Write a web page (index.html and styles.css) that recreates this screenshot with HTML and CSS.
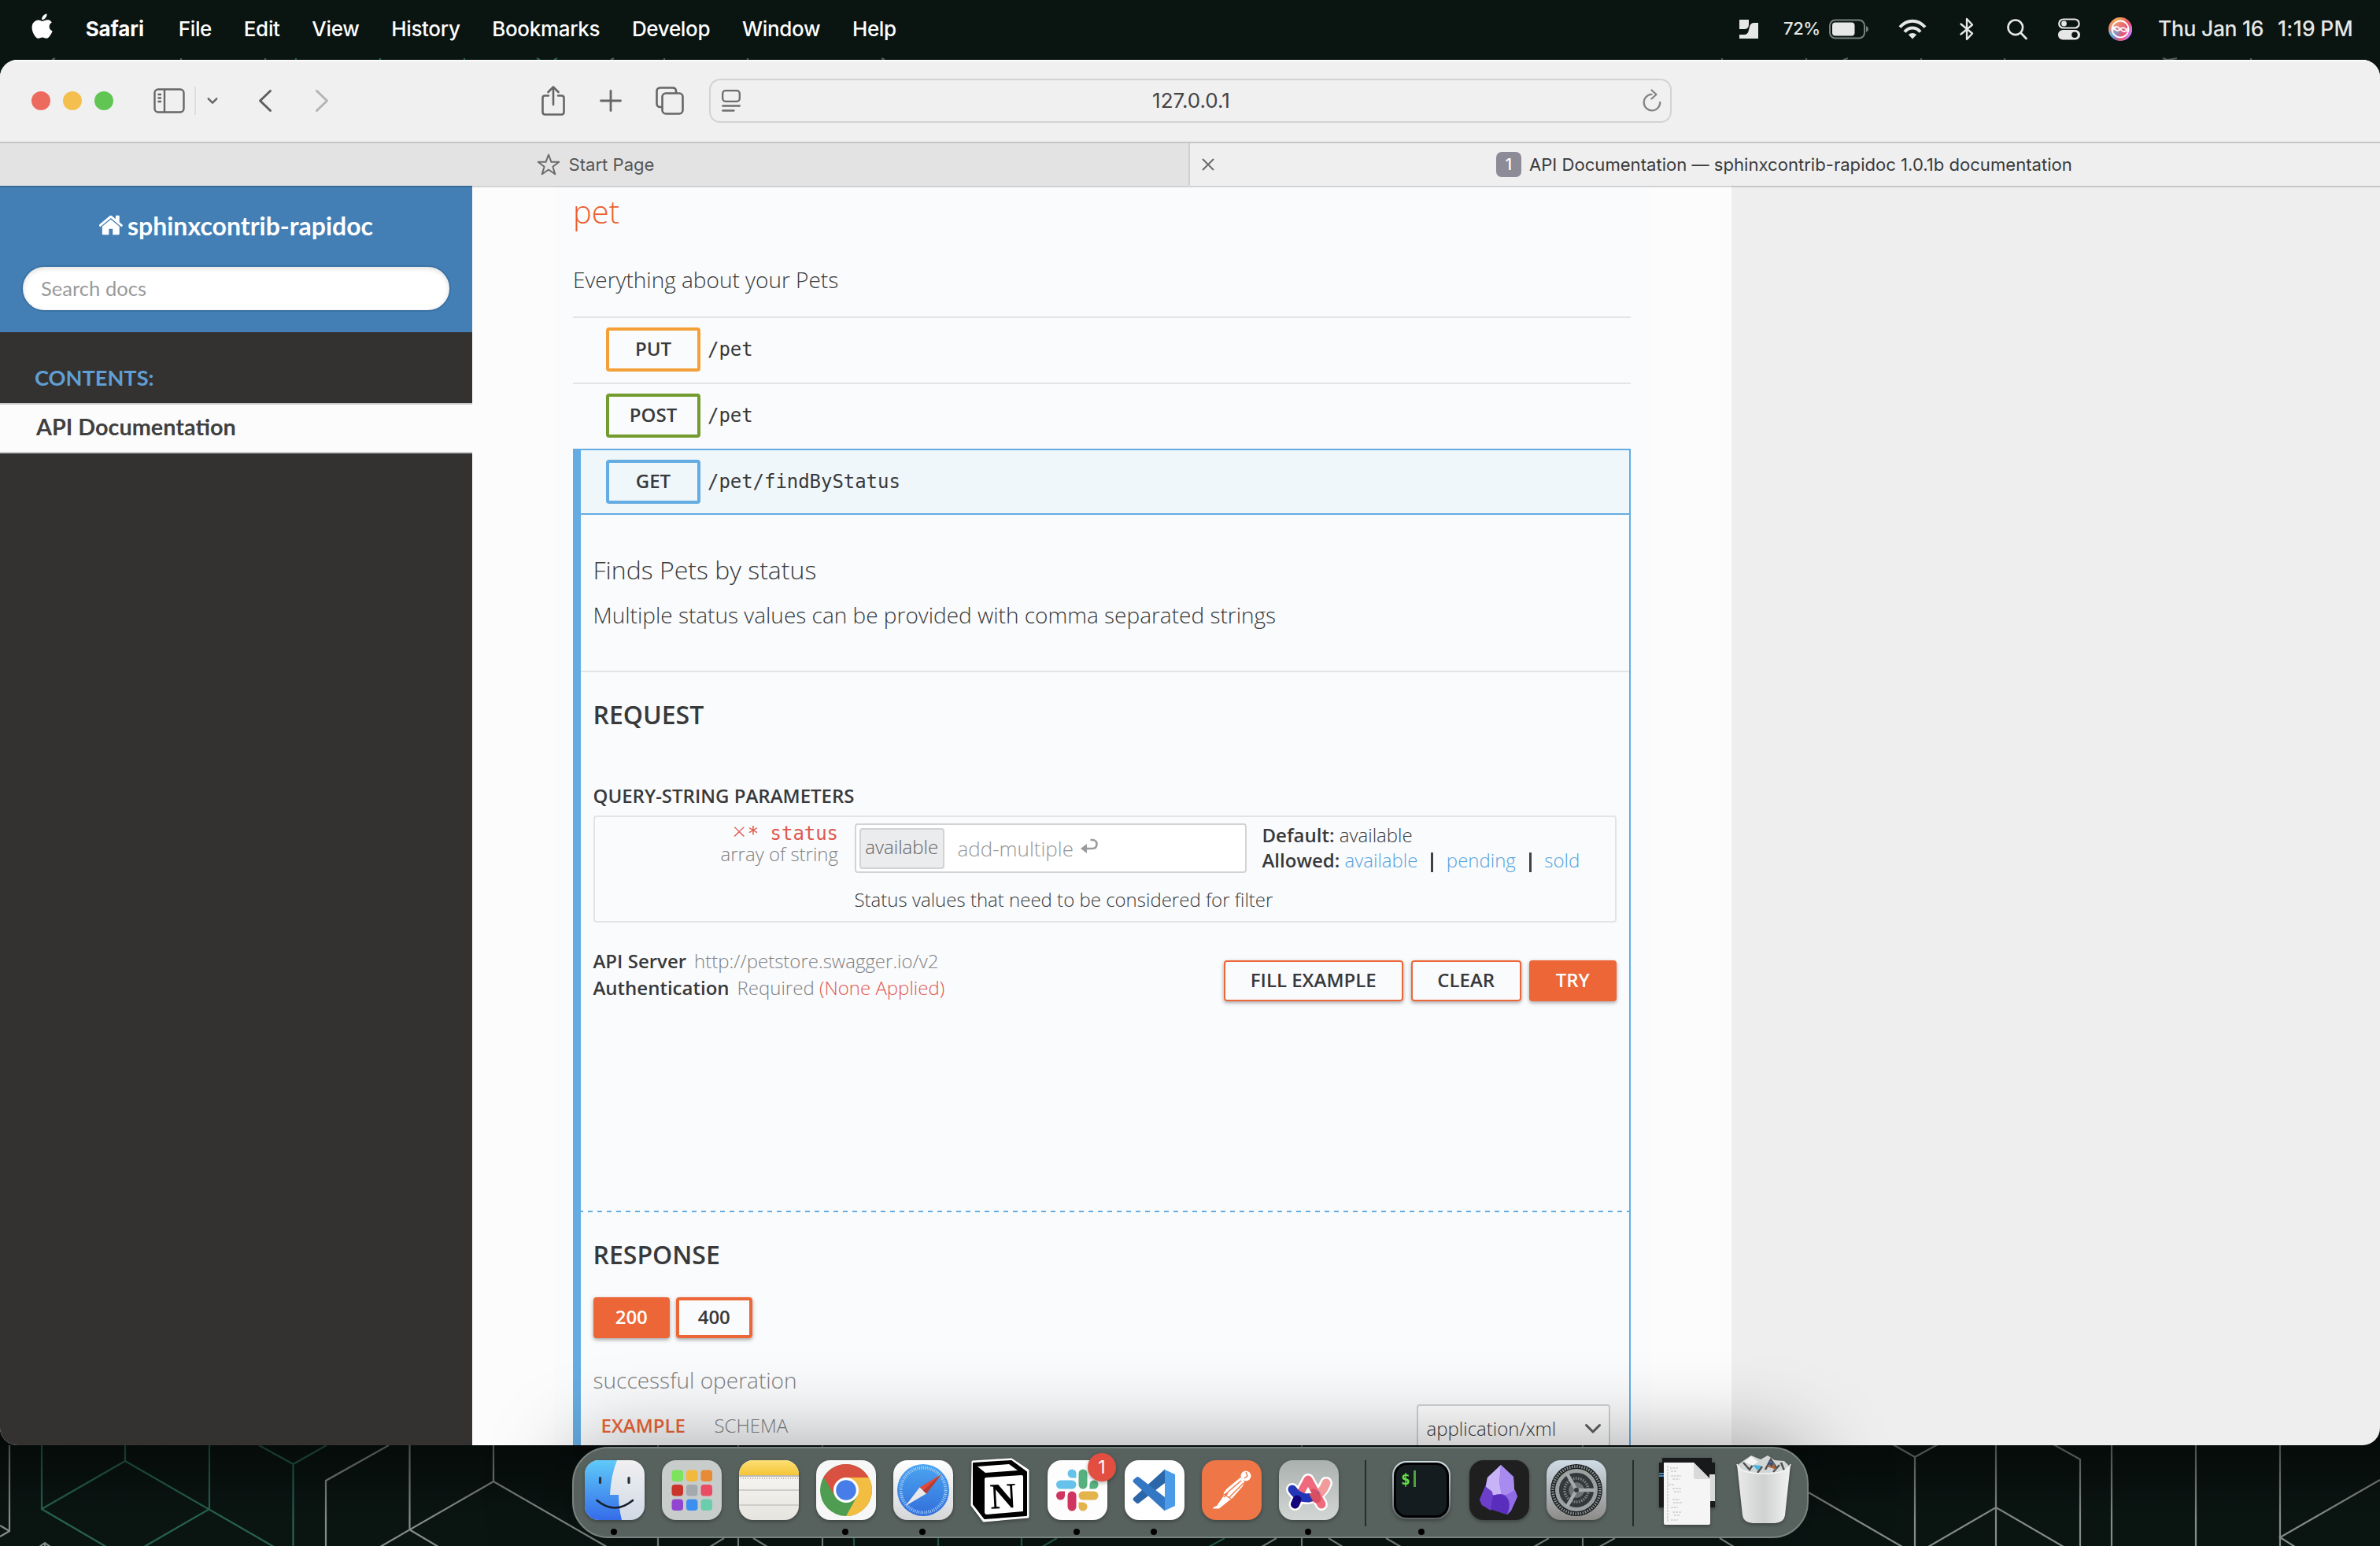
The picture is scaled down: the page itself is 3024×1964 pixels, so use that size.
FILE: index.html
```html
<!DOCTYPE html>
<html lang="en">
<head>
<meta charset="utf-8">
<title>API Documentation — sphinxcontrib-rapidoc 1.0.1b documentation</title>
<link rel="stylesheet" href="styles.css">
</head>
<body>
<div class="desktop">
  <svg class="wallpaper" width="3024" height="1964" viewBox="0 0 3024 1964" fill="none" stroke-width="2.200">
    <g stroke="#858b88">
      <path d="M12 1836V1945L0 1952M12 1945L0 1938M50 1965L57 1960L64 1965M57 1960V1964M494 1836L414 1881V1964M520.500 1836V1943M483 1965L627 1882L771 1965M520 1943L557 1965M627 1836V1882"/>
      <path d="M836 1836V1964M938 1836V1964M902 1965L920 1954M957 1954L975 1965M1045 1836V1964M1603 1965L1622 1954M1654 1836V1964M1688 1954L1706 1965M1761 1954L1780 1965M1949 1965L1968 1954M2011 1836V1964M2032 1965L2052 1954M2185 1954L2203 1965M2298 1896L2417 1965"/>
      <path d="M2405 1835L2433 1851L2462 1835M2433 1851V1964M2536 1836V1964M2450 1965L2536 1915L2622 1965M2609 1835L2643 1854V1964M2683 1836V1964M2790 1836V1964M2897 1836V1964M3024 1880L2897 1953L2916 1965"/>
      <path stroke-opacity=".6" d="M230 74V77M337 74V77M844 74V77M950 74V77M2188 74V77M2295 74V77M2441 74V77M2547 74V77M2860 74V77M66 76L70 74M776 76L780 74M1120 74L1124 76M2342 76L2348 74M2748 74L2754 76L2766 74"/>
    </g>
    <g stroke="#286350">
      <path d="M53 1836V1917L135 1965M53 1917L159 1856V1836M159 1856L348 1965M266 1836V1917L183 1965M329 1836L372.500 1860L415 1836M372.500 1860V1964M1085 1954V1964M1192 1954V1964M1298 1954V1964M1324 1965L1343 1954M1536 1965L1556 1954"/>
      <path d="M376 74V77M483 74V77M590 74V77M682 74L686 76M708 74L704 76"/>
    </g>
    <defs><linearGradient id="wshade" x1="0" x2="0" y1="0" y2="1"><stop offset="0" stop-opacity=".55"/><stop offset="1" stop-opacity="0"/></linearGradient></defs>
    <rect y="1820" width="3024" height="110" fill="url(#wshade)"/>
  </svg>

  <header class="menubar">
    <nav class="menus">
      <svg class="apple" width="28" height="33" viewBox="0 0 28 33" fill="#fff"><path d="M19.500 0.500c.3 2-.6 4-1.700 5.300-1.200 1.400-3 2.400-4.700 2.300-.2-1.900.7-3.900 1.800-5.100C16.100 1.600 18 .6 19.500.5zM25.800 11.500c-2 1.200-3.200 3-3.200 5.300 0 2.700 1.600 4.800 4 5.700-.6 1.900-1.500 3.700-2.700 5.300-1.400 2-2.700 4-4.900 4-2.100 0-2.700-1.300-5.100-1.300s-3.200 1.300-5.200 1.300c-2 .1-3.600-2.100-5-4.100C.9 23.700-.9 16.700 2.300 12.100c1.500-2.300 4-3.700 6.400-3.700 2.200 0 3.900 1.400 5.500 1.400 1.500 0 3.600-1.700 6.300-1.500 1.200 0 3.700.4 5.300 3.200z"/></svg>
      <span class="app">Safari</span><span>File</span><span>Edit</span><span>View</span><span>History</span><span>Bookmarks</span><span>Develop</span><span>Window</span><span>Help</span>
    </nav>
    <div class="status">
      <svg width="24" height="26" viewBox="0 0 24 26" fill="#e6e8e7"><path d="M0 1h12v6q0 6-6 6H0zM24 5v20H0v-5h6q5 0 6-6l1-4q1-5 6-5z"/></svg>
      <span class="pct">72%</span>
      <svg class="battery" width="50" height="26" viewBox="0 0 50 26"><rect x="1" y="1.500" width="44" height="23" rx="7" fill="none" stroke="#76807c" stroke-width="2"/><rect x="4" y="4.500" width="28.500" height="17" rx="4" fill="#e6e8e7"/><path d="M47 9q3 1.500 3 4t-3 4z" fill="#76807c"/></svg>
      <svg class="wifi" width="36" height="26" viewBox="0 0 36 26" fill="none" stroke="#e6e8e7" stroke-width="4"><path d="M2 10.500Q9 2.800 18 2.800T34 10.500"/><path d="M8 16.500Q12 11.500 18 11.500T28 16.500"/><path d="M18 25.500L12.800 20Q18 15.800 23.200 20z" fill="#e6e8e7" stroke="none"/></svg>
      <svg class="bt" width="18" height="30" viewBox="0 0 18 30" fill="none" stroke="#e6e8e7" stroke-width="2.300" stroke-linejoin="round" stroke-linecap="round"><path d="M1.500 8.500L16 20.500L9 28V2L16 9.500L1.500 21.500"/></svg>
      <svg class="mag" width="26" height="27" viewBox="0 0 26 27" fill="none" stroke="#e6e8e7" stroke-width="2.600" stroke-linecap="round"><circle cx="10.800" cy="10.800" r="9.300"/><path d="M17.800 18L24.500 25"/></svg>
      <svg class="cc" width="28" height="28" viewBox="0 0 28 28"><rect x="1.200" y="1.500" width="25.500" height="11" rx="5.500" fill="none" stroke="#e6e8e7" stroke-width="2.200"/><circle cx="7.500" cy="7" r="3.400" fill="#e6e8e7"/><rect y="15" width="28" height="12.500" rx="6.200" fill="#e6e8e7"/><circle cx="21" cy="21.200" r="3.800" fill="#0a1512"/></svg>
      <svg class="siri" width="30" height="30" viewBox="0 0 30 30"><defs><linearGradient id="s1" x1="0" y1="0" x2="0.300" y2="1"><stop offset="0" stop-color="#f7a93b"/><stop offset=".45" stop-color="#e98a7c"/><stop offset=".75" stop-color="#58b6f0"/><stop offset="1" stop-color="#3b8cf0"/></linearGradient><linearGradient id="s2" x1="0" y1="0" x2="1" y2="0.500"><stop offset=".4" stop-color="#f0506a" stop-opacity="0"/><stop offset=".8" stop-color="#f0506a"/><stop offset="1" stop-color="#d678f0"/></linearGradient></defs><circle cx="15" cy="15" r="15" fill="url(#s1)"/><circle cx="15" cy="15" r="15" fill="url(#s2)"/><circle cx="15" cy="15" r="10.500" fill="none" stroke="#fff" stroke-width="1.800"/><path d="M5 17Q9 8 15 15T25 13M6 12Q10 20 15 15T24 18" fill="none" stroke="#fff" stroke-width="1.800"/></svg>
      <span class="date">Thu Jan 16</span><span class="clock">1:19 PM</span>
    </div>
  </header>

  <section class="window">
    <div class="toolbar">
      <div class="tb-left">
        <i class="light red"></i><i class="light yellow"></i><i class="light green"></i>
        <svg class="i-side" width="40" height="32" viewBox="0 0 40 32" fill="none" stroke="#666" stroke-width="2.400"><rect x="1.500" y="1.500" width="37" height="29" rx="4.500"/><path d="M14 2V30M5.500 8H10M5.500 12.500H10M5.500 17H10"/></svg>
        <i class="vline"></i>
        <svg class="i-down" width="14" height="10" viewBox="0 0 16 10" fill="none" stroke="#666" stroke-width="2.800" stroke-linecap="round" stroke-linejoin="round"><path d="M2 2L8 8L14 2"/></svg>
        <svg class="i-back" width="18" height="30" viewBox="0 0 18 30" fill="none" stroke="#5f5f5f" stroke-width="3" stroke-linecap="round" stroke-linejoin="round"><path d="M15.500 2.500L2.500 15L15.500 27.500"/></svg>
        <svg class="i-fwd" width="18" height="30" viewBox="0 0 18 30" fill="none" stroke="#b4b4b4" stroke-width="3" stroke-linecap="round" stroke-linejoin="round"><path d="M2.500 2.500L15.500 15L2.500 27.500"/></svg>
      </div>
      <div class="tb-mid">
        <svg width="30" height="38" viewBox="0 0 30 38" fill="none" stroke="#666" stroke-width="2.600" stroke-linecap="round" stroke-linejoin="round"><path d="M9 12.500H4.500Q1.500 12.500 1.500 15.500V33Q1.500 36.500 4.500 36.500H25.500Q28.500 36.500 28.500 33V15.500Q28.500 12.500 25.500 12.500H21M15 24V2M8.500 8L15 1.500L21.500 8"/></svg>
        <svg class="i-plus" width="28" height="28" viewBox="0 0 28 28" stroke="#666" stroke-width="2.800" stroke-linecap="round"><path d="M14 1.500V26.500M1.500 14H26.500"/></svg>
        <svg class="i-tabs" width="36" height="36" viewBox="0 0 36 36" fill="none" stroke="#666" stroke-width="2.600"><path d="M8.500 26H6Q1.500 26 1.500 21.500V6Q1.500 1.500 6 1.500H21.500Q26 1.500 26 6V8.500"/><rect x="8.500" y="8.500" width="26" height="26" rx="4.500"/></svg>
      </div>
      <div class="address">
        <svg width="24" height="28" viewBox="0 0 24 28" fill="none" stroke="#6d6d6d" stroke-width="2.300" stroke-linecap="round"><rect x="1.200" y="1.200" width="21.600" height="13.600" rx="3.500"/><path d="M1.200 20.500H22.800M1.200 26.500H15.500"/></svg>
        <span>127.0.0.1</span>
        <svg width="26" height="30" viewBox="0 0 26 30" fill="none" stroke="#858585" stroke-width="2.300" stroke-linecap="round" stroke-linejoin="round"><path d="M12.500 6.800A10.300 10.300 0 1 0 23.300 17M12.500 1.500L18.500 7L12.500 12.500"/></svg>
      </div>
    </div>
    <div class="tabs">
      <div class="tab idle">
        <svg width="30" height="28" viewBox="0 0 30 28" fill="none" stroke="#6b6b6b" stroke-width="2" stroke-linejoin="round"><path d="M15 1.500L18.500 10.800H28.300L20.400 16.700L23.300 26.300L15 20.500L6.700 26.300L9.600 16.700L1.700 10.800H11.500z"/></svg>
        <span>Start Page</span>
      </div>
      <div class="tab current">
        <svg class="close" width="16" height="16" viewBox="0 0 16 16" stroke="#6b6b6b" stroke-width="2"><path d="M1 1L15 15M15 1L1 15"/></svg>
        <span class="favicon">1</span><span>API Documentation — sphinxcontrib-rapidoc 1.0.1b documentation</span>
      </div>
    </div>

    <div class="page">
      <aside class="side">
        <div class="side-top">
          <div class="project"><svg width="32" height="34" viewBox="64 0 1664 1792" fill="#fff"><path d="M1408 992v480q0 26-19 45t-45 19h-384v-384h-256v384h-384q-26 0-45-19t-19-45v-480q0-1 .5-3t.5-3l575-474 575 474q1 2 1 6zm223-69l-62 74q-8 9-21 11h-3q-13 0-21-7l-692-577-692 577q-12 8-24 7-13-2-21-11l-62-74q-8-10-7-23.500t11-21.500l719-599q32-26 76-26t76 26l244 204v-195q0-14 9-23t23-9h192q14 0 23 9t9 23v408l219 182q10 8 11 21.500t-7 23.500z"/></svg><span>sphinxcontrib-rapidoc</span></div>
          <div class="search">Search docs</div>
        </div>
        <div class="caption">CONTENTS:</div>
        <div class="toc">API Documentation</div>
      </aside>
      <main class="main">
        <div class="rapidoc">
          <h2>pet</h2>
          <p class="tagdesc">Everything about your Pets</p>
          <div class="op"><b class="method put">PUT</b><code>/pet</code></div>
          <div class="op"><b class="method post">POST</b><code>/pet</code></div>
          <section class="open">
            <div class="ophead"><b class="method get">GET</b><code>/pet/findByStatus</code></div>
            <div class="summary">
              <h3>Finds Pets by status</h3>
              <p>Multiple status values can be provided with comma separated strings</p>
            </div>
            <div class="request">
              <h4>REQUEST</h4>
              <h5>QUERY-STRING PARAMETERS</h5>
              <div class="params">
                <div class="pname"><code><span class="x">×</span>* status</code><span>array of string</span></div>
                <div class="pval">
                  <div class="field"><span class="chip">available</span><span class="ph">add-multiple</span><svg width="24" height="20" viewBox="0 0 24 20" fill="none" stroke="#9b9b9b" stroke-width="2.600"><path d="M4 13H15.500Q21.500 13 21.500 7.500T15.500 2H13.500"/><path d="M9 7V19L1 13z" fill="#9b9b9b" stroke="none"/></svg></div>
                  <p>Status values that need to be considered for filter</p>
                </div>
                <div class="pinfo">
                  <div><b>Default:</b> available</div>
                  <div><b>Allowed:</b> <a>available</a><i></i><a>pending</a><i></i><a>sold</a></div>
                </div>
              </div>
              <div class="actions">
                <div class="server">
                  <div><b>API Server</b><span>http://petstore.swagger.io/v2</span></div>
                  <div><b>Authentication</b><span>Required <em>(None Applied)</em></span></div>
                </div>
                <b class="btn fill">FILL EXAMPLE</b><b class="btn clear">CLEAR</b><b class="btn try">TRY</b>
              </div>
            </div>
            <div class="response">
              <h4>RESPONSE</h4>
              <div class="codes"><b class="on">200</b><b>400</b></div>
              <p>successful operation</p>
              <div class="viewbar"><b>EXAMPLE</b><span>SCHEMA</span>
                <div class="select"><span>application/xml</span><svg width="22" height="14" viewBox="0 0 22 14" fill="none" stroke="#5d5f60" stroke-width="3" stroke-linecap="round" stroke-linejoin="round"><path d="M2.500 2.500L11 11L19.500 2.500"/></svg></div>
              </div>
            </div>
          </section>
        </div>
      </main>
    </div>
  </section>

  <footer class="dock">
    <div class="app-icon running"><svg viewBox="0 0 76 76"><defs><linearGradient id="f1" x2="0" y2="1"><stop stop-color="#5fcaf9"/><stop offset="1" stop-color="#356ce9"/></linearGradient><linearGradient id="f2" x2="0" y2="1"><stop stop-color="#f1f0f2"/><stop offset="1" stop-color="#d0d9e6"/></linearGradient><clipPath id="rr"><rect width="76" height="76" rx="18"/></clipPath></defs><g clip-path="url(#rr)"><rect width="76" height="76" fill="url(#f2)"/><path d="M0 0H41Q33 20 32 44H43Q43 60 47 76H0z" fill="url(#f1)"/><path d="M19.500 22.500V28.500M56 22.500V28.500" stroke="#22303e" stroke-width="3.200" stroke-linecap="round"/><path d="M15.500 51Q38 70 61 51" fill="none" stroke="#17222e" stroke-width="2.600" stroke-linecap="round"/></g></svg></div>
    <div class="app-icon"><svg viewBox="0 0 76 76"><rect width="76" height="76" rx="18" fill="#c8cccb"/><rect x="12.500" y="12.500" width="14.500" height="14.500" rx="4" fill="#7be35c"/><rect x="31" y="12.500" width="14.500" height="14.500" rx="4" fill="#f3b93c"/><rect x="49.500" y="12.500" width="14.500" height="14.500" rx="4" fill="#e68b34"/><rect x="12.500" y="31" width="14.500" height="14.500" rx="4" fill="#c9352a"/><rect x="31" y="31" width="14.500" height="14.500" rx="4" fill="#a3a9ac"/><rect x="49.500" y="31" width="14.500" height="14.500" rx="4" fill="#ea4c63"/><rect x="12.500" y="49.500" width="14.500" height="14.500" rx="4" fill="#9146cf"/><rect x="31" y="49.500" width="14.500" height="14.500" rx="4" fill="#3b8ff0"/><rect x="49.500" y="49.500" width="14.500" height="14.500" rx="4" fill="#6bcdae"/></svg></div>
    <div class="app-icon"><svg viewBox="0 0 76 76"><defs><linearGradient id="n1" x2="0" y2="1"><stop stop-color="#fbdf75"/><stop offset="1" stop-color="#f5c536"/></linearGradient><linearGradient id="n2" x2="0" y2="1"><stop stop-color="#fbfaf9"/><stop offset="1" stop-color="#e6e4de"/></linearGradient></defs><g clip-path="url(#rr)"><rect width="76" height="76" fill="url(#n2)"/><rect width="76" height="19" fill="url(#n1)"/><path d="M0 20H76" stroke="#a8a59d" stroke-width="1.500"/><path d="M2 23H76" stroke="#b9b7b2" stroke-width="2" stroke-dasharray="1 2"/><path d="M0 38H76M0 57H76" stroke="#cfcecb" stroke-width="1.800"/></g></svg></div>
    <div class="app-icon running"><svg viewBox="0 0 76 76"><rect width="76" height="76" rx="18" fill="#f7f7f7"/><circle cx="38" cy="38" r="33" fill="#4f9d50"/><path d="M38 22H66.800A33 33 0 0 1 38 71L52 46z" fill="#f3bd42"/><path d="M24.100 46L9.400 21.500A33 33 0 0 1 66.800 22H38z" fill="#d95140"/><circle cx="38" cy="38" r="16" fill="#fff"/><circle cx="38" cy="38" r="12.800" fill="#477de8"/></svg></div>
    <div class="app-icon running"><svg viewBox="0 0 76 76"><defs><linearGradient id="sf" x2="0" y2="1"><stop stop-color="#4ba5f0"/><stop offset="1" stop-color="#326edb"/></linearGradient><linearGradient id="sb" x2="0" y2="1"><stop stop-color="#fff"/><stop offset="1" stop-color="#d4d6d8"/></linearGradient></defs><rect width="76" height="76" rx="18" fill="url(#sb)"/><circle cx="38" cy="38" r="33" fill="url(#sf)"/><circle cx="38" cy="38" r="28.500" fill="none" stroke="#b3d9fa" stroke-width="4" stroke-dasharray=".9 1.580"/><path d="M61 18L33.500 34.500L42 42.500z" fill="#df493b"/><path d="M15.500 58L33.500 34.500L42 42.500z" fill="#e9e9ea"/><path d="M61 18L37.800 38.500L42 42.500z" fill="#b53b35"/></svg></div>
    <div class="app-icon"><svg viewBox="0 0 76 76"><path d="M3 2L52 -1L73 13V72L17 77L2 57z" fill="#fff" stroke="#fff" stroke-width="3" stroke-linejoin="round"/><path d="M4 4L52 1L71 15V70L18 74L4 56z" fill="#000" stroke="#000" stroke-width="2" stroke-linejoin="round"/><path d="M9 8L49 5L60 13L19 16z" fill="#fff"/><path d="M20 22L65 19Q67 19 67 21V65L21 69Q18 69 18 66V24Q18 22 20 22z" fill="#fff"/><text x="41.500" y="61" text-anchor="middle" class="notion" transform="rotate(-3 41 45)">N</text></svg></div>
    <div class="app-icon running"><svg viewBox="0 0 76 76"><rect width="76" height="76" rx="18" fill="#fdfdfd"/><g stroke-width="11" stroke-linecap="round"><path d="M16.500 31H31" stroke="#66c2ea"/><path d="M45 17V31" stroke="#56b07f"/><path d="M45 45H59" stroke="#e3b44c"/><path d="M31 45V59" stroke="#cf3560"/></g><path d="M25.500 17a5.500 5.500 0 0 1 11 0v5.500h-5.500a5.500 5.500 0 0 1-5.500-5.500z" fill="#66c2ea"/><path d="M59 25.500a5.500 5.500 0 0 1 0 11h-5.500v-5.500a5.500 5.500 0 0 1 5.500-5.500z" fill="#56b07f"/><path d="M50.500 59a5.500 5.500 0 0 1-11 0v-5.500h5.500a5.500 5.500 0 0 1 5.500 5.500z" fill="#e3b44c"/><path d="M16.500 50.500a5.500 5.500 0 0 1 0-11h5.500v5.500a5.500 5.500 0 0 1-5.500 5.500z" fill="#cf3560"/></svg><span class="badge">1</span></div>
    <div class="app-icon running"><svg viewBox="0 0 76 76"><rect width="76" height="76" rx="18" fill="#fff"/><path d="M51 11.500L11 48Q10 49.500 11 51L15 54.500Q16.500 55.500 18 54.500L51 29z" fill="#2a66a8"/><path d="M51 64.500L11 28Q10 26.500 11 25L15 21.500Q16.500 20.500 18 21.500L51 47z" fill="#3478c4"/><path d="M50 11.500L64 18V58L50 64.500Q51 63 51 61V15Q51 13 50 11.500z" fill="#4a9ce8"/></svg></div>
    <div class="app-icon"><svg viewBox="0 0 76 76"><rect width="76" height="76" rx="18" fill="#ee7647"/><circle cx="56" cy="20" r="6.500" fill="#fff"/><path d="M49 22Q53 24 54 28L52 33L39 48L35 51L22 61.500H14L15 59.500L19 58L28 45L27 42.500L32 36z" fill="#fff"/><path d="M50 26L29 44M53 29L34 48M56 15L58 20L54 23M27 42.500L37 49M28 47L33 42" stroke="#ee7647" stroke-width="1.400" fill="none"/></svg></div>
    <div class="app-icon running"><svg viewBox="0 0 76 76"><defs><linearGradient id="ar" x2="0" y2="1"><stop stop-color="#abb1af"/><stop offset="1" stop-color="#d2d6d4"/></linearGradient></defs><rect width="76" height="76" rx="18" fill="url(#ar)"/><g fill="none" stroke-linecap="round" stroke-linejoin="round"><path d="M20.500 56L37 25L54 56M17 37Q24 48 36 48Q53 46 60 29" stroke="#fff" stroke-width="16"/><path d="M60 29Q54 46 38 48" stroke="#f29b9b" stroke-width="11"/><path d="M20.500 56L37 25L54 56" stroke="#ee6a7c" stroke-width="11"/><path d="M17 37Q24 48 37 48Q42 47 46 44" stroke="#2436b8" stroke-width="11"/><path d="M44 42L48 49" stroke="#d94f62" stroke-width="11"/><path d="M20.500 56L23 50" stroke="#12047c" stroke-width="11"/></g><path d="M32.500 42L37 34L41.500 42z" fill="#fff"/></svg></div>
    <div class="sep"></div>
    <div class="app-icon running"><svg viewBox="0 0 76 76"><defs><linearGradient id="tm" x2="0" y2="1"><stop stop-color="#cfdde5"/><stop offset="1" stop-color="#5d6163"/></linearGradient></defs><rect y="1" width="74" height="74" rx="18" fill="url(#tm)"/><rect x="3.500" y="4.500" width="67" height="67" rx="15" fill="#141c1f" stroke="#000" stroke-width="3"/><text x="11" y="30.500" class="term">$</text><path d="M28.500 13V34" stroke="#4da33a" stroke-width="3"/></svg></div>
    <div class="app-icon"><svg viewBox="0 0 76 76"><rect width="76" height="76" rx="18" fill="#1f1f20"/><path d="M40 6L23 22L20 35L13 50L16 57L27 62L48 69L53 64L61 46L57 37L56 21z" fill="#8b67df"/><path d="M40 6L23 22L20 38L30 44L41 44L38 28z" fill="#c7b3f5"/><path d="M40 6L56 21L57 37L60 46L50 44L41 44L38 28z" fill="#a98aef"/><path d="M20 33L13 50L16 57L27 64L31 50L29 40z" fill="#6b3fc9"/><path d="M30 45L27 62L48 69L53 62Q50 44 40 43Q34 43 30 45z" fill="#5a2ebd"/><path d="M61 46L53 64L48 69Q54 55 47 44L58 38z" fill="#8f6be6"/></svg></div>
    <div class="app-icon"><svg viewBox="0 0 76 76"><defs><linearGradient id="st" x2="0" y2="1"><stop stop-color="#cfdce6"/><stop offset="1" stop-color="#8d8b88"/></linearGradient></defs><rect width="76" height="76" rx="18" fill="url(#st)"/><circle cx="38" cy="38" r="33" fill="#1b1f20"/><circle cx="38" cy="38" r="30" fill="none" stroke="#8d9395" stroke-width="3.500" stroke-dasharray="1.600 1.540"/><circle cx="38" cy="38" r="24.500" fill="#33383a" stroke="#9ba0a1" stroke-width="5"/><circle cx="38" cy="38" r="15" fill="none" stroke="#7d8384" stroke-width="3.500" stroke-dasharray="1.600 1.540"/><circle cx="38" cy="38" r="10" fill="#6d7374"/><path d="M38 38L26 17M38 38L26 59M38 38H62" stroke="#a5aaab" stroke-width="4.500"/><circle cx="38" cy="38" r="3" fill="#333839"/></svg></div>
    <div class="sep"></div>
    <div class="app-icon"><svg viewBox="3 0 76 82"><path d="M6 -3H69V3H73V60H2V3H6z" fill="#17191a"/><path d="M66 18H73V52H66z" fill="#d7d9da"/><path d="M2 17H10M2 20H10" stroke="#4d83b9" stroke-width="2"/><path d="M8 3H46L67 24V80Q67 82 65 82H10Q8 82 8 80z" fill="#f5f5f5"/><path d="M46 3L67 24H48Q46 24 46 21z" fill="#d9d9d9"/><path d="M13 7V78M16 10H26M17 14H24M17 20H30M19 24H28M14 31H22M19 36H31M21 40H30M19 50H28M20 54H31M17 60H26M19 66H30M21 70H28M17 76H26" stroke="#bbb" stroke-width="1" stroke-dasharray="3 1"/></svg></div>
    <div class="app-icon"><svg viewBox="4 2 76 82"><defs><linearGradient id="tr"><stop stop-color="#e9eae9"/><stop offset=".5" stop-color="#cfd2d1"/><stop offset="1" stop-color="#f2f2f2"/></linearGradient></defs><path d="M5 8L13 2L22 -4L34 1L43 -4L52 2L64 3L71 10L66 19H10z" fill="#d3d6d6"/><path d="M12 5L20 14L28 2M17 2L24 8M40 14L47 1L55 13M60 5L64 15M30 18L36 10M50 17L58 8" stroke="#4f5152" stroke-width="2.500" fill="none"/><path d="M13 4L22 -3L31 4L24 9z" fill="#f4f4f4"/><path d="M24 8L35 9L30 15z" fill="#44b5e0"/><path d="M42 10L50 4L54 14z" fill="#a8653a"/><path d="M43 6L50 4L49 10z" fill="#2c4c8c"/><path d="M4 7Q7 19 38 19T72 7L65 72Q64 81 52 82H24Q12 81 11 72z" fill="url(#tr)"/><path d="M4 7Q7 19 38 19T72 7" fill="none" stroke="#f5f5f5" stroke-width="1.500"/></svg></div>
  </footer>
</div>
</body>
</html>
```
FILE: styles.css
```css
* { box-sizing: border-box; }
body { margin: 0; }
h2, h3, h4, h5, p { margin: 0; }
i, em { font-style: normal; }
svg { display: block; flex: none; }

.desktop {
  position: relative;
  width: 3024px;
  height: 1964px;
  overflow: hidden;
  background: #0a1512;
  font-family: Inter, sans-serif;
}
.wallpaper { position: absolute; left: 0; top: 0; }

/* menu bar */
.menubar {
  position: relative;
  display: flex;
  justify-content: space-between;
  height: 76px;
  padding: 0 26px 4px 40px;
  color: #fff;
  font-size: 26px;
  font-weight: 500;
  letter-spacing: -.32px;
  white-space: nowrap;
}
.menus { display: flex; align-items: center; gap: 40.700px; }
.apple { margin: -5px 0 0; }
.menus .app { margin-right: 3px; font-weight: 700; letter-spacing: -.1px; }
.status { display: flex; align-items: center; color: #e6e8e7; }
.status svg { margin-top: 2px; }
.pct { margin-left: 32px; width: 46px; font-size: 22px; letter-spacing: -.4px; }
.status .battery { margin-left: 12px; }
.status .wifi { margin-left: 38px; }
.status .bt { margin-left: 42px; }
.status .mag { margin-left: 42px; }
.status .cc { margin-left: 39px; }
.status .siri { margin-left: 36px; }
.date { margin-left: 33px; width: 152px; font-size: 26.500px; }
.clock { width: 104px; font-size: 26.500px; letter-spacing: .3px; word-spacing: -1px; }

/* browser window */
.window {
  position: relative;
  height: 1760px;
  border-radius: 22px;
  overflow: hidden;
  background: #eee;
}
.toolbar {
  display: flex;
  align-items: center;
  height: 104px;
  padding-bottom: 3px;
  background: #f0f0f0;
  border-top: 2px solid #fbfbfb;
}
.tb-left { display: flex; align-items: center; width: 688px; padding-left: 40px; }
.light { width: 24px; height: 24px; margin: 1px 16px 0 0; border-radius: 50%; }
.red { background: #ed6a5e; }
.yellow { background: #f5bf4f; }
.green { background: #61c554; }
.i-side { margin-left: 35px; }
.vline { width: 2px; height: 36px; margin: 0 14px 0 12px; background: #dedede; }
.i-back { margin-left: 51px; }
.i-fwd { margin-left: 54px; }
.tb-mid { display: flex; align-items: center; width: 213px; }
.i-plus { margin-left: 44px; }
.i-tabs { margin-left: 43px; }
.address {
  display: flex;
  align-items: center;
  justify-content: space-between;
  width: 1223px;
  height: 56px;
  padding: 0 10px 0 14px;
  border: 2px solid #d3d3d3;
  border-radius: 14px;
  color: #444;
  font-size: 26px;
}
.tabs {
  display: flex;
  height: 56px;
  padding-bottom: 1px;
  border-top: 2px solid #c6c6c6;
  background: linear-gradient(90deg, #e3e3e3 50%, #efefef 50%);
  color: #3a3a3a;
  font-size: 22.100px;
  font-weight: 400;
}
.tab { display: flex; align-items: center; }
.idle {
  width: 1512px;
  padding-left: 3px;
  justify-content: center;
  gap: 11px;
  border-right: 2px solid #cfcfcf;
  color: #555;
}
.current { flex: 1; padding-left: 15px; }
.favicon {
  width: 32px;
  margin: 0 10px 0 358px;
  border-radius: 7px;
  background: #8d8b98;
  color: #fff;
  font-size: 20px;
  font-weight: 500;
  line-height: 32px;
  text-align: center;
}
.page { position: relative; display: flex; height: 1600px; }
.page::before {
  content: "";
  position: absolute;
  inset: 0 0 auto;
  height: 2px;
  background: rgba(0, 0, 0, .16);
}

/* docs sidebar */
.side { width: 600px; background: #343131; font-family: Lato, sans-serif; }
.side-top { height: 186px; padding: 33px 27px 0; background: #437fb5; }
.project {
  display: flex;
  justify-content: center;
  gap: 4px;
  color: #fff;
  font-size: 32px;
  font-weight: 700;
  line-height: 36px;
}
.search {
  height: 59px;
  margin-top: 32px;
  padding-left: 23px;
  border: 2px solid #3a72a3;
  border-radius: 30px;
  background: #fff;
  box-shadow: inset 0 2px 6px #ddd;
  color: #9a9a9a;
  font-size: 25.600px;
  line-height: 55px;
}
.caption { margin-top: 40px; padding-left: 44px; color: #5f9fd4; font-size: 27.200px; font-weight: 700; line-height: 36px; }
.toc {
  height: 64px;
  margin-top: 14px;
  padding-left: 46px;
  border: solid #c9c9c9;
  border-width: 2px 0;
  background: #fcfcfc;
  color: #404040;
  font-size: 28.800px;
  font-weight: 700;
  line-height: 57px;
}

/* api console */
.main { width: 1600px; padding: 0 104px; background: #fcfcfc; }
.rapidoc {
  height: 1600px;
  padding: 5px 24px 0;
  overflow: hidden;
  background: #fafbfd;
  color: #38393a;
  font-family: "Open Sans", sans-serif;
  font-size: 24px;
  font-weight: 300;
}
.rapidoc b, h4, h5 { font-weight: 600; }
h2 { color: #ed5f2e; font-size: 40px; font-weight: 300; line-height: 56px; }
.tagdesc { margin: 38px 0 27px; font-size: 28px; line-height: 40px; }
code { font-family: "DejaVu Sans Mono", monospace; font-size: 24px; letter-spacing: -.05px; }
.op, .ophead { display: flex; align-items: center; gap: 9px; }
.op { height: 84px; padding-left: 42px; border-top: 2px solid #e2e4e6; }
.op code, .ophead code { margin-bottom: 2px; font-weight: 400; }
.method {
  width: 120px;
  height: 56px;
  margin-bottom: 2px;
  border: 4px solid;
  border-radius: 4px;
  line-height: 46px;
  text-align: center;
}
.put { border-color: #f3a039; }
.post { border-color: #739b2d; }
.get { border-color: #64ace2; }
.open { height: 1290px; border: solid #64ace2; border-width: 2px 2px 0 10px; }
.ophead { height: 82px; padding-left: 32px; border-bottom: 2px solid #64ace2; background: #f0f7fb; }
.ophead .method { margin: 0; }
.ophead code { margin: 0; }
.summary { height: 200px; padding: 50px 16px 0; border-bottom: 2px solid #e2e4e6; }
h3 { margin-bottom: 17px; font-size: 32px; font-weight: 300; line-height: 40px; }
.summary p { font-size: 28px; line-height: 40px; }
.summary, .request, .response { text-indent: -.5px; }
.request { height: 684px; padding: 34px 16px 0; }
h4 { font-size: 32px; line-height: 40px; }
h5 { margin: 67px 0 9px; font-size: 24px; line-height: 32px; }
.params { display: flex; height: 136px; border: 2px solid #e2e4e6; border-radius: 4px; }
.pname {
  display: flex;
  flex-direction: column;
  width: 309px;
  padding-top: 8px;
  color: #7f8081;
  line-height: 26px;
  text-align: right;
}
.pname code { height: 26px; color: #e0574d; line-height: 26px; }
.x { margin-right: 2px; font-family: "Open Sans", sans-serif; font-size: 30px; line-height: 20px; }
.pval { width: 498px; margin: 8px 20px 0 21px; }
.field {
  display: flex;
  align-items: center;
  height: 63px;
  padding-left: 4px;
  border: 2px solid #d1d3d5;
  border-radius: 4px;
  background: #fff;
  color: #979797;
}
.chip {
  width: 108px;
  height: 52px;
  border: 2px solid #d1d3d5;
  border-radius: 4px;
  background: #ebecee;
  color: #616263;
  line-height: 43px;
  text-align: center;
}
.ph { margin: 0 8px 0 17px; font-size: 26px; }
.field svg { margin-top: -6px; }
.pval p { margin-top: 18px; line-height: 32px; white-space: nowrap; }
.pinfo { padding-top: 7px; line-height: 32px; white-space: nowrap; }
.pinfo a { color: #55a2dd; }
.pinfo i { display: inline-block; width: 3px; height: 25px; margin: 0 16.700px; background: #404142; vertical-align: -6px; }
.actions { display: flex; align-items: flex-end; gap: 10px; margin-top: 32px; }
.server { flex: 1; color: #7f8081; line-height: 34px; }
.server b { margin-right: 10px; color: #38393a; }
.server em { color: #e0574d; }
.btn {
  height: 52px;
  border: 2px solid #ed6637;
  border-radius: 4px;
  box-shadow: 0 2px 5px rgba(0, 0, 0, .35);
  line-height: 46px;
  text-align: center;
}
.fill { width: 228px; }
.clear { width: 140px; }
.try { width: 111px; background: #ed6637; color: #fff; }
.response {
  height: 300px;
  padding: 36px 16px 0;
  background: repeating-linear-gradient(90deg, #64ace2 0 6px, transparent 6px 12px) -3px 0 / 1400px 2px no-repeat;
}
.codes { display: flex; gap: 8px; margin: 34px 0 33px; }
.codes b {
  width: 97px;
  height: 52px;
  border: 4px solid #ed6637;
  border-radius: 4px;
  box-shadow: 0 2px 5px rgba(0, 0, 0, .35);
  line-height: 42px;
  text-align: center;
}
.codes .on { background: #ed6637; color: #fff; }
.response p { color: #7f8081; font-size: 28px; line-height: 40px; }
.viewbar { display: flex; align-items: flex-start; padding: 11px 8px 0 10px; line-height: 32px; }
.viewbar b { margin-top: 11px; color: #ed6637; }
.viewbar > span { margin: 11px 0 0 37px; color: #7f8081; }
.select {
  display: flex;
  align-items: center;
  justify-content: space-between;
  width: 246px;
  height: 62px;
  margin-left: auto;
  padding: 0 9px 0 11px;
  border: 2px solid #d1d3d5;
  border-radius: 4px;
  background: #fff;
}

/* dock */
.dock {
  position: relative;
  display: flex;
  gap: 22px;
  width: 1571px;
  height: 116px;
  margin: 2px 0 0 727px;
  padding: 15px 14px;
  border: 2px solid #78827e;
  border-radius: 46px;
  background: #57615d;
  box-shadow: 0 0 110px rgba(0, 0, 0, .38);
}
.app-icon { position: relative; flex: none; width: 76px; height: 76px; }
.app-icon svg { width: 76px; overflow: visible; filter: drop-shadow(0 2px 2px rgba(0, 0, 0, .3)); }
.running::after {
  content: "";
  position: absolute;
  left: 33px;
  top: 87px;
  width: 8px;
  height: 8px;
  border-radius: 50%;
  background: #000;
}
.sep { flex: none; width: 24px; height: 84px; background: linear-gradient(#252d2a, #252d2a) center / 2px 100% no-repeat; }
.badge {
  position: absolute;
  left: 51px;
  top: -9px;
  width: 36px;
  height: 36px;
  border-radius: 50%;
  background: #e24f41;
  box-shadow: 0 2px 5px rgba(0, 0, 0, .3);
  color: #fff;
  font-size: 23px;
  line-height: 36px;
  text-align: center;
}
.notion { font: 700 46px "Liberation Serif", serif; }
.term { font: 700 20px "DejaVu Sans Mono", monospace; fill: #64e048; }
```
